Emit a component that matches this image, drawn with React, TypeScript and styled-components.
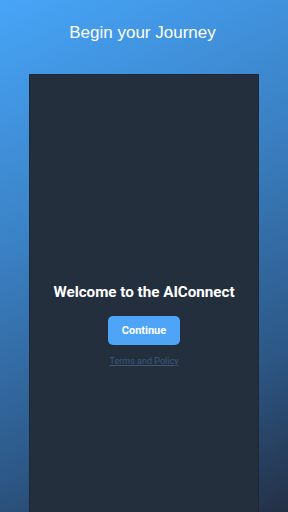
import styled, { createGlobalStyle } from "styled-components";

const GlobalStyle = createGlobalStyle`
  html, body {
    margin: 0;
    padding: 0;
  }
  body {
    font-family: Roboto, "Liberation Sans", sans-serif;
  }
`;

const Screen = styled.div`
  width: 288px;
  height: 512px;
  overflow: hidden;
  background: linear-gradient(155deg, #47a5f8 0%, #3a80c3 40%, #2c5786 75%, #243045 100%);
  display: flex;
  flex-direction: column;
  align-items: center;
`;

const Title = styled.h1`
  margin: 22px 3px 0 0;
  font-family: "Liberation Sans", Arial, sans-serif;
  font-weight: 400;
  font-size: 17px;
  line-height: 22px;
  color: #ffffff;
`;

const Panel = styled.main`
  margin-top: 30px;
  width: 230px;
  height: 512px;
  flex-shrink: 0;
  box-sizing: border-box;
  padding-bottom: 12px;
  background: #242f3e;
  border: 1px solid #1e2733;
  display: flex;
  flex-direction: column;
  align-items: center;
  justify-content: center;
`;

const Heading = styled.h2`
  margin: 0;
  font-family: Roboto, sans-serif;
  font-weight: 700;
  font-size: 15.2px;
  line-height: 20px;
  color: #ffffff;
`;

const Button = styled.button`
  margin-top: 14px;
  width: 72px;
  height: 29px;
  border: none;
  border-radius: 5px;
  background: #4ea4f7;
  color: #ffffff;
  font-family: Roboto, sans-serif;
  font-weight: 700;
  font-size: 11px;
  cursor: pointer;
`;

const TermsLink = styled.a`
  margin-top: 11px;
  font-family: Roboto, sans-serif;
  font-size: 9px;
  color: #3b5878;
  text-decoration: underline;
`;

function App(): JSX.Element {
  return (
    <>
      <GlobalStyle />
      <Screen>
        <Title>Begin your Journey</Title>
        <Panel>
          <Heading>Welcome to the AIConnect</Heading>
          <Button>Continue</Button>
          <TermsLink href="#">Terms and Policy</TermsLink>
        </Panel>
      </Screen>
    </>
  );
}

export default App;
